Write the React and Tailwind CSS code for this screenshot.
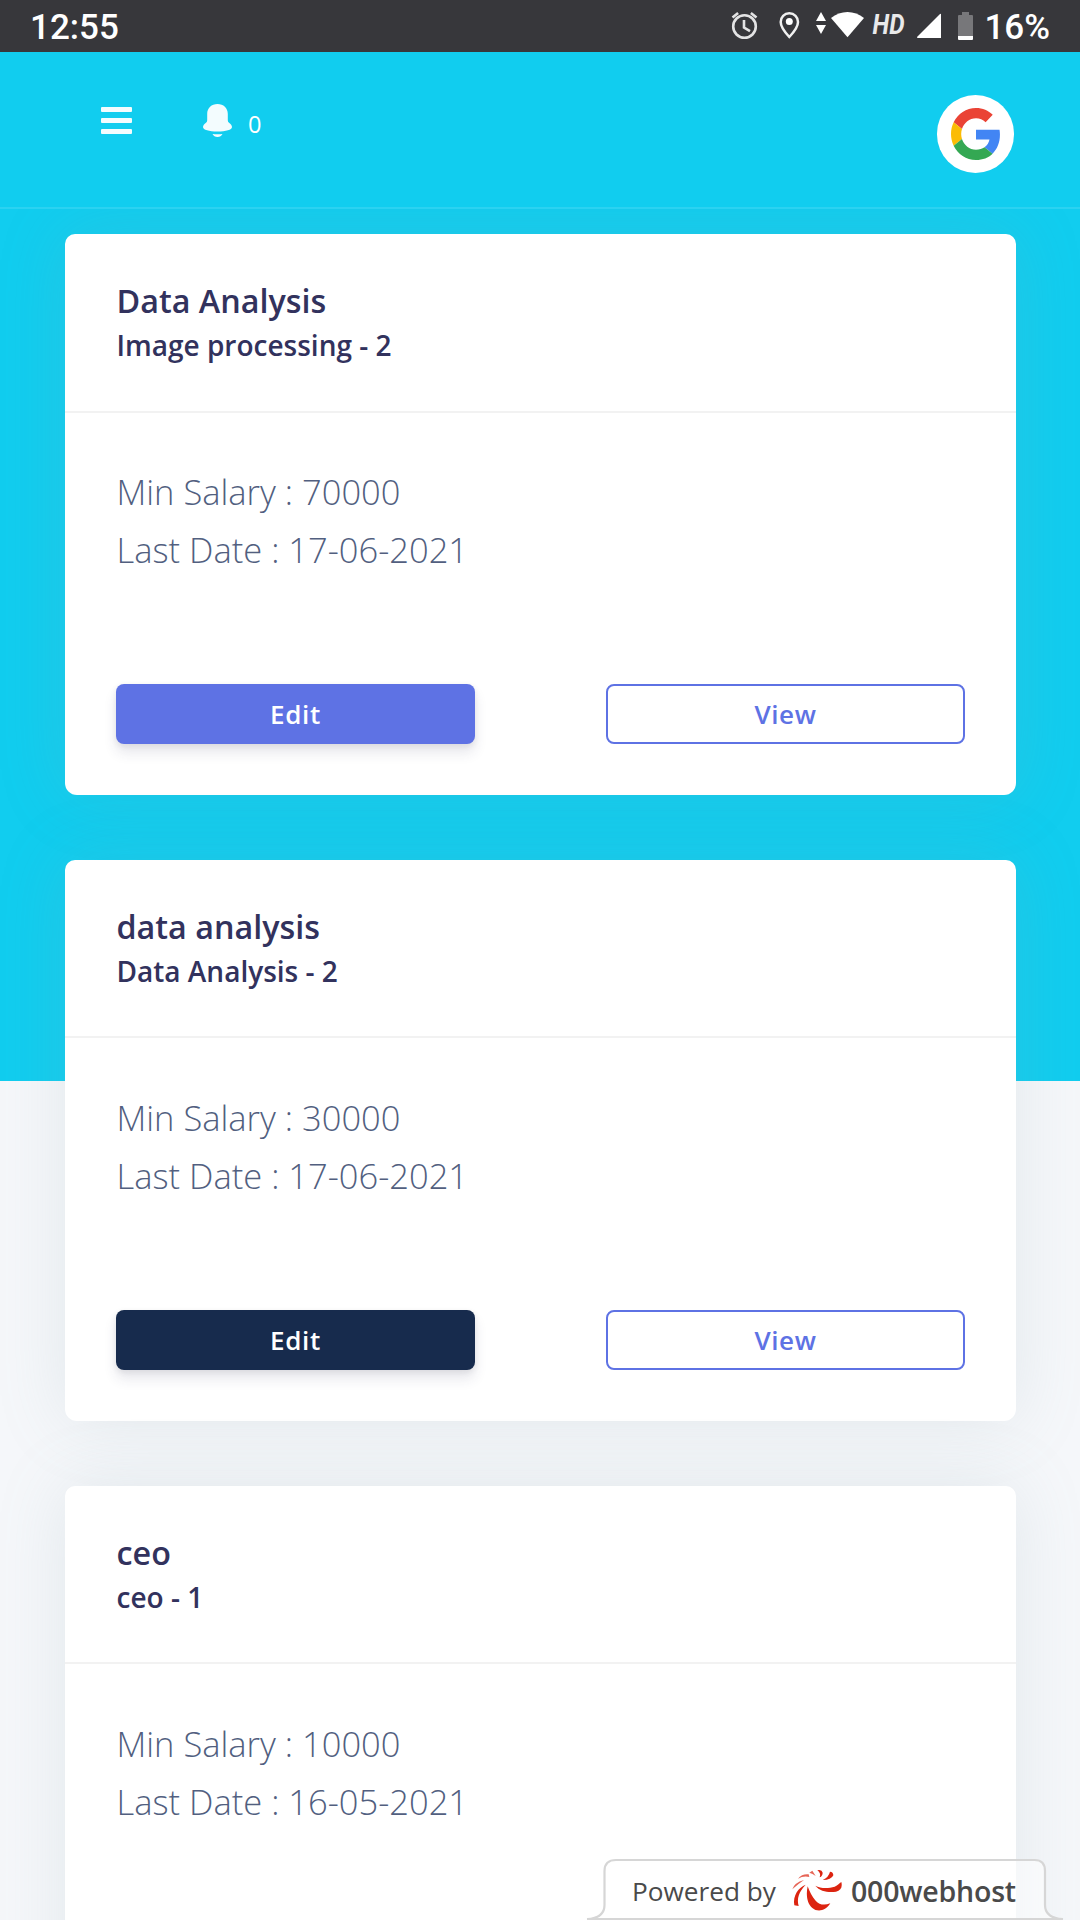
const jobs = [
  { title: "Data Analysis", sub: "Image processing - 2", salary: "70000", date: "17-06-2021", edit: "bg-[#5e72e4]" },
  { title: "data analysis", sub: "Data Analysis - 2", salary: "30000", date: "17-06-2021", edit: "bg-[#172b4d]" },
  { title: "ceo", sub: "ceo - 1", salary: "10000", date: "16-05-2021" },
];

function StatusBar() {
  return (
    <div className="flex h-[52px] items-center justify-between bg-[#37373b] pl-[30px] pr-[30px] font-['Roboto',sans-serif] text-[35px] leading-[52px] font-medium text-white">
      <span className="pt-[3px]">12:55</span>
      <div className="flex items-center">
        <svg width="252" height="52" viewBox="728 0 252 52" fill="none" className="block">
          <g stroke="#e3e3e4" strokeWidth="2.6">
            <circle cx="744.5" cy="26.5" r="11.3" />
            <path d="M744 20v7.5l6 3.6M732.5 17.500l5.600-4.600M756.500 17.500l-5.600-4.600" />
          </g>
          <path d="M789.300 13.300c-5 0-8.600 3.800-8.600 8.700 0 5.800 8.600 15 8.600 15s8.700-9.200 8.700-15c0-4.900-3.700-8.700-8.700-8.700z" stroke="#f0f0f0" strokeWidth="2.500" />
          <circle cx="789.300" cy="21.500" r="3.500" fill="#fff" />
          <path d="M821 12l5 9h-10zM821 34l5-9h-10z" fill="#fff" />
          <path d="M831 18c9.500-8 23.500-8 33 0l-16.500 19.300z" fill="#fff" />
          <text x="872.500" y="34.300" fill="#e9e9ea" fontFamily="Roboto" fontSize="27" fontWeight="700" fontStyle="italic" textLength="32" lengthAdjust="spacingAndGlyphs">HD</text>
          <path d="M941 14v24h-23.500q-1-.5 0-1.500l22-22q1-1 1.500-.5z" fill="#fff" />
          <path d="M962 12h7v3h3q1 0 1 1v20h-15v-20q0-1 1-1h3z" fill="#77777a" />
          <path d="M958 36h15v3q0 1-1 1h-13q-1 0-1-1z" fill="#fff" />
        </svg>
        <span className="ml-[4px] pt-[3px]">16%</span>
      </div>
    </div>
  );
}

function GoogleLogo() {
  return (
    <svg width="50" height="52" viewBox="0 0 48 48" preserveAspectRatio="none">
      <path fill="#EA4335" d="M24 9.500c3.540 0 6.710 1.220 9.210 3.600l6.850-6.850C35.900 2.380 30.470 0 24 0 14.620 0 6.510 5.380 2.560 13.220l7.980 6.190C12.430 13.720 17.740 9.500 24 9.500z" />
      <path fill="#4285F4" d="M46.980 24.550c0-1.570-.15-3.090-.38-4.550H24v9.020h12.940c-.58 2.960-2.260 5.480-4.780 7.180l7.730 6c4.510-4.180 7.090-10.360 7.090-17.650z" />
      <path fill="#FBBC05" d="M10.530 28.590c-.48-1.450-.76-2.990-.76-4.590s.27-3.140.76-4.590l-7.980-6.190C.92 16.460 0 20.120 0 24c0 3.880.92 7.540 2.560 10.780l7.970-6.190z" />
      <path fill="#34A853" d="M24 48c6.480 0 11.930-2.130 15.890-5.810l-7.730-6c-2.150 1.450-4.920 2.300-8.160 2.300-6.260 0-11.570-4.220-13.470-9.910l-7.980 6.190C6.510 42.620 14.620 48 24 48z" />
    </svg>
  );
}

function NavBar() {
  return (
    <nav className="flex h-[157px] items-start justify-between border-b-2 border-[#2bd2f1] bg-[#11cdef] pl-[101px] pr-[66px]">
      <div className="flex items-start">
        <div className="mt-[55px] flex w-[31px] flex-col gap-[6px]">
          <div className="h-[5px] rounded-[1px] bg-[#f3fcfe]" />
          <div className="h-[5px] rounded-[1px] bg-[#f3fcfe]" />
          <div className="h-[5px] rounded-[1px] bg-[#f3fcfe]" />
        </div>
        <svg className="mt-[52px] ml-[71px]" width="29" height="33" viewBox="0 0 29 33" fill="#f3fcfe">
          <path d="M14.500 0C20.500 0 24.800 4 24.800 10v6.200q0 1.500 1.200 2.500c1.800 1.300 3 2.800 3 4.300 0 2.800-6 4.500-14.500 4.500S0 25.800 0 23c0-1.500 1.200-3 3-4.300q1.200-1 1.200-2.500V10C4.200 4 8.500 0 14.500 0z" />
          <path d="M9.500 30q5 .6 10 0-1.500 3-5 3t-5-3z" />
        </svg>
        <span className="mt-[54px] ml-[16px] font-['Open_Sans',sans-serif] text-[23.5px] leading-[36px] font-medium text-white">0</span>
      </div>
      <div className="mt-[43px] flex h-[78px] w-[77px] items-center justify-center rounded-full bg-white">
        <GoogleLogo />
      </div>
    </nav>
  );
}

function JobCard({ job }) {
  return (
    <article className="flex h-[561px] shrink-0 flex-col rounded-t-[10px] rounded-b-[12px] bg-white shadow-[0_0_69px_0_rgba(136,158,166,0.17)]">
      <header className="h-[178.600px] border-b-2 border-[#f2f2f2] px-[51.500px] pt-[43px] font-semibold text-[#32325d]">
        <h3 className="text-[32.300px] leading-[47px]">{job.title}</h3>
        <h4 className="text-[28px] leading-[42px]">{job.sub}</h4>
      </header>
      <div className="px-[51.500px] pt-[50.400px] text-[34.500px] leading-[58px] font-light text-[#525f7f]">
        <p>Min Salary : {job.salary}</p>
        <p>Last Date : {job.date}</p>
      </div>
      {job.edit && (
        <div className="mt-auto mb-[50.600px] flex justify-between px-[51px] text-[26px] font-semibold tracking-[0.025em]">
          <button className={"h-[60px] w-[359px] rounded-[8px] text-white shadow-[0_9px_13px_rgba(50,50,93,0.11),0_2px_6px_rgba(0,0,0,0.08)] " + job.edit}>Edit</button>
          <button className="h-[60px] w-[359px] rounded-[8px] border-2 border-[#5e72e4] text-[#5e72e4]">View</button>
        </div>
      )}
    </article>
  );
}

function HostLogo() {
  return (
    <svg className="absolute top-[9px] left-[199px]" width="50" height="44" viewBox="36 18 150 132" fill="#dc2410">
      <path d="M83 73C77 100 82 126 97 138C112 151 136 148 151 124C132 131 118 128 107 116C96 104 89 90 83 73z" />
      <path d="M106 71C122 80 146 79 164 74C174 70 178 64 184 60C188 76 182 86 168 89C146 93 120 88 106 71z" />
      <path d="M77 68C56 76 38 100 43 130L56 132C50 110 56 90 77 68z" />
      <path d="M128 54Q146 46 150 29Q160 30 160 40Q154 54 128 54z" />
      <path d="M112 25Q126 22 128 32Q128 42 119 46Q124 34 112 25z" />
      <path d="M37 82Q43 62 72 54Q54 66 37 82zM54 50Q66 35 86 37L88 45Q70 41 54 50zM88 32L97 26L107 42Q98 35 88 32z" fillOpacity="0.700" />
    </svg>
  );
}

function HostBadge() {
  return (
    <div className="absolute bottom-0 left-[593px] h-[61px] w-[475px]">
      <svg className="absolute inset-0 overflow-visible" width="475" height="61" viewBox="0 0 475 61">
        <path d="M-6 60.200Q11.500 59 11.500 46V12Q11.500 1 23 1H441.500Q452 1 452 12V46Q452 59 470 60.200z" fill="#fff" fillOpacity="0.550" stroke="#d6d6d6" strokeWidth="2.200" />
      </svg>
      <HostLogo />
      <div className="relative flex pt-[13px] pl-[39px] leading-[38px] text-[#4a4a4a]">
        <span className="w-[219px] text-[26.200px] font-medium">Powered by</span>
        <span className="text-[28.500px] font-semibold tracking-[-0.200px]">000webhost</span>
      </div>
    </div>
  );
}

export default function App() {
  return (
    <div className="relative flex h-[1920px] w-[1080px] flex-col overflow-hidden bg-[linear-gradient(to_bottom,#11cdef_1081px,#f5f7fa_1081px)] font-['Open_Sans',sans-serif]">
      <div className="relative z-10 shrink-0">
        <StatusBar />
        <NavBar />
      </div>
      <main className="flex flex-col gap-[64.800px] pt-[25px] pr-[64px] pl-[65px]">
        {jobs.map((job) => (
          <JobCard key={job.title} job={job} />
        ))}
      </main>
      <HostBadge />
    </div>
  );
}
